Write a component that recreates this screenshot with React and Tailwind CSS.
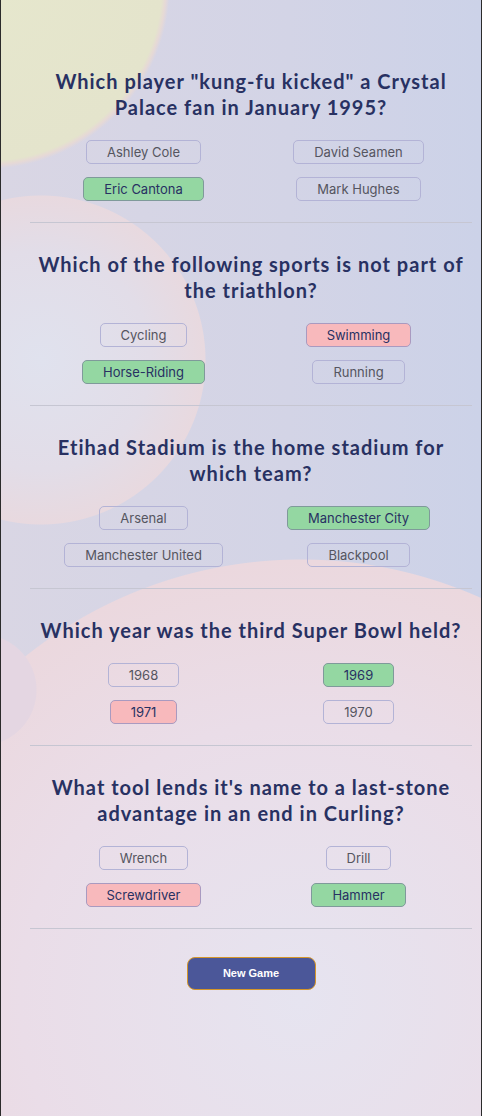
import React from "react";

const questions = [
  {
    q: 'Which player "kung-fu kicked" a Crystal Palace fan in January 1995?',
    answers: [
      { text: "Ashley Cole" },
      { text: "David Seamen" },
      { text: "Eric Cantona", state: "correct" },
      { text: "Mark Hughes" },
    ],
  },
  {
    q: "Which of the following sports is not part of the triathlon?",
    answers: [
      { text: "Cycling" },
      { text: "Swimming", state: "wrong" },
      { text: "Horse-Riding", state: "correct" },
      { text: "Running" },
    ],
  },
  {
    q: "Etihad Stadium is the home stadium for which team?",
    answers: [
      { text: "Arsenal" },
      { text: "Manchester City", state: "correct" },
      { text: "Manchester United" },
      { text: "Blackpool" },
    ],
  },
  {
    q: "Which year was the third Super Bowl held?",
    answers: [
      { text: "1968" },
      { text: "1969", state: "correct" },
      { text: "1971", state: "wrong" },
      { text: "1970" },
    ],
  },
  {
    q: "What tool lends it's name to a last-stone advantage in an end in Curling?",
    answers: [
      { text: "Wrench" },
      { text: "Drill" },
      { text: "Screwdriver", state: "wrong" },
      { text: "Hammer", state: "correct" },
    ],
  },
];

function Answer({ text, state }) {
  const tone =
    state === "correct"
      ? "bg-[#94d7a2] border-[#7f9a9a] text-[#283162]"
      : state === "wrong"
      ? "bg-[#f8b9bc] border-[#a99ac0] text-[#283162]"
      : "bg-transparent border-[#b3b3d6] text-[#555560]";
  return (
    <button
      className={`h-[24px] px-[20px] rounded-[5px] border text-[13px] leading-none ${tone}`}
      style={{ fontFamily: "Inter, 'Liberation Sans', sans-serif" }}
    >
      {text}
    </button>
  );
}

export default function App() {
  return (
    <div className="min-h-screen border-x border-[#2b2b2b] bg-[radial-gradient(circle_at_-15px_-15px,#e6e7cd_0,#e4e4cc_176px,#e6d9d6_180px,transparent_184px),radial-gradient(circle_at_40px_360px,#e0e2ee_0,#e2dde8_110px,#e8d9df_164px,transparent_165px),radial-gradient(circle_at_-20px_690px,#e4d6e2_0,#e4d6e2_55px,transparent_56px),radial-gradient(circle_at_300px_1000px,#e6e4f0_0,#eadde8_280px,#ebd8de_440px,transparent_441px),linear-gradient(to_right,#d9d6e4,#d3d4e6_60%,#ccd2e8)]">
      <div className="ml-[29px] mr-[9px] pt-[68px] pb-[128px]">
        {questions.map((item, i) => (
          <div key={i} className="border-b border-[#c6c6d2] px-[6px] pb-[21px] pt-[28px] first:pt-0">
            <h2
              className="-mx-[6px] text-center text-[20px] leading-[26px] font-bold tracking-[1px] text-[#283162]"
              style={{ fontFamily: "Lato, 'Open Sans', sans-serif" }}
            >
              {item.q}
            </h2>
            <div className="mt-[20px] grid grid-cols-2 justify-items-center gap-y-[13px]">
              {item.answers.map((a) => (
                <Answer key={a.text} {...a} />
              ))}
            </div>
          </div>
        ))}
        <div className="flex justify-center pt-[28px]">
          <button
            className="w-[129px] h-[33px] rounded-[8px] border border-[#d4962a] bg-[#4b5799] text-white text-[11px] font-bold"
            style={{ fontFamily: "'Liberation Sans', Arial, sans-serif" }}
          >
            New Game
          </button>
        </div>
      </div>
    </div>
  );
}
